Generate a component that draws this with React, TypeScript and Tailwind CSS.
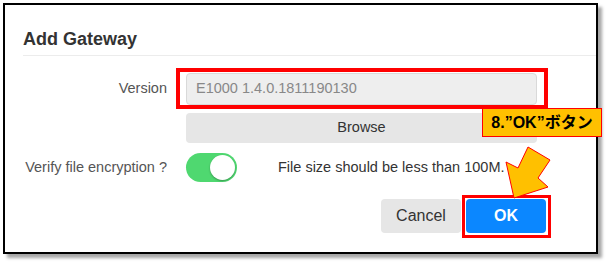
import React from "react";

export default function App() {
  return (
    <div
      className="relative w-[607px] h-[262px] bg-white pt-[3px] pl-[3px]"
      style={{ fontFamily: '"Liberation Sans", Arial, sans-serif' }}
    >
      <div className="w-[595px] h-[251px] border-2 border-black bg-white shadow-[4px_4px_3px_rgba(0,0,0,0.35)] flex flex-col">
        <div className="ml-[18px] pt-[21px] pb-[3px] border-b border-[#ececec]">
          <h1 className="text-[18px] leading-[26px] font-bold text-[#333]">Add Gateway</h1>
        </div>

        <div className="mt-[17px] flex items-center">
          <div className="w-[162px] text-right text-[14.5px] text-[#555]">Version</div>
          <div className="relative ml-[19px]">
            <div className="w-[351px] h-[32px] rounded-[4px] border border-[#d9d9d9] bg-[#eeeeee] flex items-center pl-[9px] text-[14.5px] text-[#888]">
              E1000 1.4.0.1811190130
            </div>
            <div className="absolute left-[-10px] right-[-11px] top-[-5px] bottom-[-4px] border-[4px] border-[#ff0000]" />
          </div>
        </div>

        <div className="mt-[8px] ml-[181px] w-[351px] h-[30px] rounded-[4px] bg-[#e6e6e6] flex items-center justify-center text-[14.5px] text-[#333]">
          Browse
        </div>

        <div className="mt-[10px] flex items-center">
          <div className="w-[162px] text-right text-[14.5px] text-[#555]">Verify file encryption ?</div>
          <div className="ml-[19px] w-[51px] h-[29px] rounded-full bg-[#4fd870] flex items-center justify-end pr-[2px]">
            <div className="w-[25px] h-[25px] rounded-full bg-white shadow-[0_1px_2px_rgba(0,0,0,0.3)]" />
          </div>
          <div className="ml-[41px] text-[14.5px] text-[#333]">File size should be less than 100M.</div>
        </div>

        <div className="mt-[17px] flex justify-end pr-[50px] gap-[5px]">
          <div className="w-[80px] h-[34px] rounded-[4px] bg-[#e6e6e6] flex items-center justify-center text-[16px] text-[#333]">
            Cancel
          </div>
          <div className="relative">
            <div className="w-[80px] h-[34px] rounded-[4px] bg-[#0b87ff] flex items-center justify-center text-[16px] font-bold text-white">
              OK
            </div>
            <div className="absolute left-[-4px] right-[-5px] top-[-4px] bottom-[-5px] border-[3px] border-[#ff0000]" />
          </div>
        </div>
      </div>

      <div
        className="absolute left-[482px] top-[108px] w-[120px] h-[29px] bg-[#ffc000] border border-[#ff0000] flex items-center justify-center text-[16px] font-bold text-black"
        style={{ fontFamily: '"Liberation Sans", "Noto Sans CJK JP", sans-serif' }}
      >
        8.”OK”ボタン
      </div>

      <svg className="absolute left-0 top-0" width="607" height="262" viewBox="0 0 607 262">
        <polygon
          points="514,198 506,162 518,168 528,147 550,160 538,178 548,187"
          fill="#ffc000"
          stroke="#ff0000"
          strokeWidth="1"
          strokeLinejoin="miter"
        />
      </svg>
    </div>
  );
}
